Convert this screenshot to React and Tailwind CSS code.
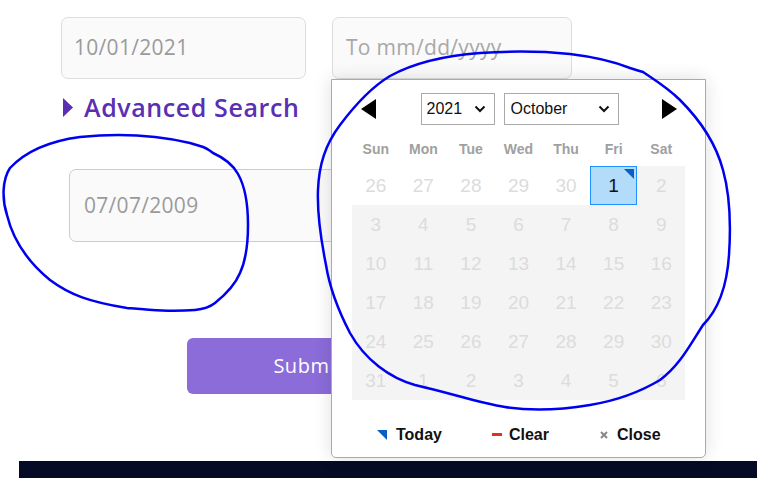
import React from "react";

const weekdays = ["Sun", "Mon", "Tue", "Wed", "Thu", "Fri", "Sat"];
const rows = [
  [26, 27, 28, 29, 30, 1, 2],
  [3, 4, 5, 6, 7, 8, 9],
  [10, 11, 12, 13, 14, 15, 16],
  [17, 18, 19, 20, 21, 22, 23],
  [24, 25, 26, 27, 28, 29, 30],
  [31, 1, 2, 3, 4, 5, 6],
];

function Chevron() {
  return (
    <svg width="12" height="8" viewBox="0 0 12 8" className="shrink-0">
      <path d="M1.5 1.5 L6 6 L10.5 1.5" fill="none" stroke="#111" strokeWidth="2" />
    </svg>
  );
}

function Calendar() {
  return (
    <div
      className="absolute left-[331px] top-[79px] w-[375px] h-[379px] bg-white border border-[#aaaaaa] rounded-b-[5px] shadow-[0_0_18px_rgba(0,0,0,0.13)] flex flex-col"
      style={{ fontFamily: '"Liberation Sans", Arial, sans-serif' }}
    >
      <div className="flex items-center h-[57px] pt-[1px] pl-[29px] pr-[28px]">
        <svg width="15" height="20" viewBox="0 0 15 20">
          <polygon points="15,0 15,20 0,10" fill="#000" />
        </svg>
        <div className="flex-1 flex justify-center gap-[9px] pl-[1px]">
          <div className="w-[74px] h-[32px] border border-[#aaaaaa] flex items-center justify-between pl-[5px] pr-[8px] text-[16px] text-[#111]">
            <span>2021</span>
            <Chevron />
          </div>
          <div className="w-[115px] h-[32px] border border-[#aaaaaa] flex items-center justify-between pl-[6px] pr-[8px] text-[16px] text-[#111]">
            <span>October</span>
            <Chevron />
          </div>
        </div>
        <svg width="15" height="20" viewBox="0 0 15 20">
          <polygon points="0,0 0,20 15,10" fill="#000" />
        </svg>
      </div>
      <div className="px-[20px]">
        <div className="grid grid-cols-7 h-[29px] pb-[5px] items-center">
          {weekdays.map((d) => (
            <div key={d} className="text-center text-[14px] font-bold text-[#a0a0a0]">
              {d}
            </div>
          ))}
        </div>
        <div className="grid grid-cols-7 w-[333px]">
          {rows.map((r, ri) =>
            r.map((n, ci) => {
              const selected = ri === 0 && ci === 5;
              const other = ri === 0 && ci < 5;
              if (selected) {
                return (
                  <div
                    key={ri + "-" + ci}
                    className="relative h-[39px] pt-[2px] bg-[#b3dcfb] border border-[#1e90ff] flex items-center justify-center text-[19px] text-[#111]"
                  >
                    1
                    <svg width="10" height="10" viewBox="0 0 10 10" className="absolute top-[2px] right-[2px]">
                      <polygon points="0,0 10,0 10,10" fill="#0b5ec2" />
                    </svg>
                  </div>
                );
              }
              return (
                <div
                  key={ri + "-" + ci}
                  className={
                    "h-[39px] pt-[2px] flex items-center justify-center text-[19px] text-[#dcdcdc] " +
                    (other ? "bg-white" : "bg-[#f4f4f4]")
                  }
                >
                  {n}
                </div>
              );
            })
          )}
        </div>
      </div>
      <div className="flex-1 flex items-center pt-[12px] pl-[45px] text-[16px] font-bold text-[#111]">
        <div className="flex items-center gap-[9px]">
          <svg width="10" height="10" viewBox="0 0 10 10">
            <polygon points="0,0 10,0 10,10" fill="#0b5ec2" />
          </svg>
          <span>Today</span>
        </div>
        <div className="flex items-center gap-[7px] ml-[50px]">
          <span className="block w-[10px] h-[3px] bg-[#e2301c]" />
          <span>Clear</span>
        </div>
        <div className="flex items-center gap-[9px] ml-[51px]">
          <svg width="8" height="8" viewBox="0 0 8 8">
            <path d="M1 1 L7 7 M7 1 L1 7" stroke="#888" strokeWidth="2" />
          </svg>
          <span>Close</span>
        </div>
      </div>
    </div>
  );
}

function Annotations() {
  return (
    <svg
      className="absolute left-0 top-0 pointer-events-none"
      width="757"
      height="478"
      viewBox="0 0 757 478"
    >
      <path
        d="M200 146 L190 143 C160 136 120 133 80 137 C50 141 25 152 10 168 C2 180 2 200 7 215 C13 240 28 262 50 280 C70 295 90 302 127 308 C150 310 170 312 195 310 C205 309 210 307 215 303 C225 295 235 285 240 273 C246 260 248 245 248 225 C248 205 246 188 238 174 C232 163 222 157 213 153 C208 149 204 147 200 146"
        fill="none"
        stroke="#0000f0"
        strokeWidth="2.5"
        strokeLinecap="round"
      />
      <path
        d="M643 72 C655 80 668 88 680 100 C698 118 715 140 723 170 C730 195 731 225 729 255 C727 285 718 310 703 325 C690 345 680 365 660 380 C640 392 620 400 590 405 C560 410 530 411 505 407 C480 403 450 393 415 385 C390 378 365 360 350 333 C338 310 330 290 326 265 C321 240 317 215 318 190 C319 165 325 145 340 125 C355 105 370 88 390 76 C410 65 440 56 480 53 C510 51 540 51 570 54 C595 57 615 62 630 68 C636 70 640 71 643 72"
        fill="none"
        stroke="#0000f0"
        strokeWidth="2.5"
        strokeLinecap="round"
      />
    </svg>
  );
}

export default function App() {
  return (
    <div
      className="relative w-[757px] h-[478px] overflow-hidden bg-white"
      style={{ fontFamily: '"Open Sans", "Noto Sans", sans-serif' }}
    >
      <div className="pt-[17px] pl-[61px] flex flex-col">
        <div className="flex gap-[26px]">
          <div className="w-[245px] h-[62px] rounded-[7px] border border-[#dddddd] bg-[#fafafa] flex items-center pl-[12px] text-[21px] tracking-[0.3px] text-[#9a9a9a]">
            10/01/2021
          </div>
          <div className="w-[240px] h-[62px] rounded-[7px] border border-[#dddddd] bg-[#fafafa] flex items-center pl-[13px] text-[21px] tracking-[0.3px] text-[#a8a8a8]">
            To mm/dd/yyyy
          </div>
        </div>
        <div className="flex items-center gap-[11px] mt-[12px] h-[33px] pl-[2px]">
          <svg width="10" height="19" viewBox="0 0 10 19">
            <polygon points="0,0 10,9.5 0,19" fill="#5a2fb3" />
          </svg>
          <span className="text-[25px] font-semibold text-[#5a2fb3] tracking-[0.6px]">Advanced Search</span>
        </div>
        <div className="ml-[8px] mt-[45px] w-[320px] h-[73px] rounded-[7px] border border-[#cccccc] bg-[#fafafa] flex items-center pl-[14px] text-[21px] tracking-[0.3px] text-[#9a9a9a]">
          07/07/2009
        </div>
        <div className="ml-[126px] mt-[96px] w-[242px] h-[56px] rounded-[6px] bg-[#8b6cd9] flex items-center justify-center text-[20px] text-white tracking-[0.5px]">
          Submit
        </div>
      </div>
      <div className="absolute left-[19px] top-[461px] w-[738px] h-[17px] bg-[#050b24]" />
      <Calendar />
      <Annotations />
    </div>
  );
}
